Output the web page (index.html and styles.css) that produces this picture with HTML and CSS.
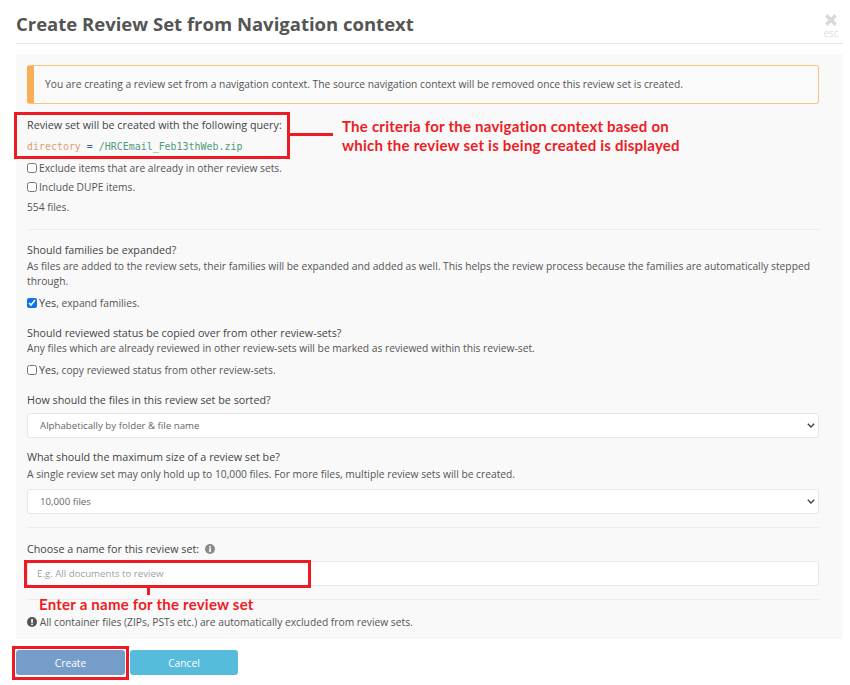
FILE: index.html
```html
<!DOCTYPE html>
<html lang="en">

<head>
    <meta charset="UTF-8">
    <title>Create Review Set from Navigation context</title>
    <link rel="stylesheet" href="styles.css">
</head>

<body>
    <div class="modal-header">
        <h2>Create Review Set from Navigation context</h2>
        <div class="close-box">
            <svg class="close-icon" width="14" height="14" viewBox="0 0 14 14">
                <path d="M1 3.5 3.5 1 7 4.5 10.500 1 13 3.500 9.500 7 13 10.500 10.500 13 7 9.500 3.500 13 1 10.500 4.500 7Z" fill="#d9d9d9" />
            </svg>
            <span>esc</span>
        </div>
    </div>

    <div class="panel">
        <div class="alert">You are creating a review set from a navigation context. The source navigation context will be removed once this review set is created.</div>

        <p class="label query-label">Review set will be created with the following query:</p>
        <p class="query"><span class="q-key">directory</span> <span class="q-op">=</span> <span class="q-val">/HRCEmail_Feb13thWeb.zip</span></p>
        <label class="check check-first"><input type="checkbox"><span>Exclude items that are already in other review sets.</span></label>
        <label class="check check-second"><input type="checkbox"><span>Include DUPE items.</span></label>
        <p class="count">554 files.</p>

        <hr class="rule rule-a">

        <p class="label">Should families be expanded?</p>
        <p class="help">As files are added to the review sets, their families will be expanded and added as well. This helps the review process because the families are automatically stepped through.</p>
        <label class="check check-yes"><input type="checkbox" checked><span><span class="label">Yes</span>, expand families.</span></label>

        <p class="label group">Should reviewed status be copied over from other review-sets?</p>
        <p class="help help-tight">Any files which are already reviewed in other review-sets will be marked as reviewed within this review-set.</p>
        <label class="check check-yes"><input type="checkbox"><span><span class="label">Yes</span>, copy reviewed status from other review-sets.</span></label>

        <p class="label group">How should the files in this review set be sorted?</p>
        <div class="select-box">
            <span>Alphabetically by folder &amp; file name</span>
            <svg width="8" height="5" viewBox="0 0 8 5"><path d="M.8.8l3.200 3.200L7.200.8" fill="none" stroke="#444" stroke-width="1.400" /></svg>
        </div>

        <p class="label group group-size">What should the maximum size of a review set be?</p>
        <p class="help help-loose">A single review set may only hold up to 10,000 files. For more files, multiple review sets will be created.</p>
        <div class="select-box select-size">
            <span>10,000 files</span>
            <svg width="8" height="5" viewBox="0 0 8 5"><path d="M.8.8l3.200 3.200L7.200.8" fill="none" stroke="#444" stroke-width="1.400" /></svg>
        </div>

        <hr class="rule rule-b">

        <p class="label name-label">Choose a name for this review set:
            <svg class="info" width="10" height="10" viewBox="0 0 10 10">
                <circle cx="5" cy="5" r="5" fill="#8a8a8a" />
                <rect x="4.200" y="4.200" width="1.700" height="3.800" fill="#fff" />
                <rect x="4.200" y="2" width="1.700" height="1.500" fill="#fff" />
            </svg>
        </p>
        <div class="text-input">E.g. All documents to review</div>

        <hr class="rule rule-c">

        <p class="note">
            <svg class="info" width="10" height="10" viewBox="0 0 10 10">
                <circle cx="5" cy="5" r="5" fill="#555" />
                <rect x="4.200" y="2" width="1.700" height="3.800" fill="#fff" />
                <rect x="4.200" y="6.600" width="1.700" height="1.500" fill="#fff" />
            </svg>
            All container files (ZIPs, PSTs etc.) are automatically excluded from review sets.
        </p>
    </div>

    <div class="actions">
        <button class="btn btn-create">Create</button>
        <button class="btn btn-cancel">Cancel</button>
    </div>

    <!-- Red annotations on top of the screenshot -->
    <div class="mark mark-query"></div>
    <div class="mark-line mark-query-line"></div>
    <div class="note-red note-query">The criteria for the navigation context based on<br>which the review set is being created is displayed</div>
    <div class="mark mark-input"></div>
    <div class="mark-line mark-input-line"></div>
    <div class="note-red note-input">Enter a name for the review set</div>
    <div class="mark mark-create"></div>
</body>

</html>
```

FILE: styles.css
```css
* {
    box-sizing: border-box;
}

body {
    margin: 0;
    padding: 0 7px 0 16px;
    font-family: "Open Sans", Arial, sans-serif;
    font-size: 10.25px;
    line-height: 15px;
    color: #555;
    background: #fff;
    position: relative;
    height: 685px;
    overflow: hidden;
}

p {
    margin: 0;
}

.modal-header {
    height: 44px;
    display: flex;
    justify-content: space-between;
    border-bottom: 1px solid #e6e6e6;
    margin-bottom: 10px;
}

.modal-header h2 {
    margin: 0;
    padding-top: 10px;
    font-size: 18.5px;
    line-height: 28px;
    font-weight: 700;
    color: #555;
}

.close-box {
    width: 18px;
    margin-right: 3px;
    padding-top: 13px;
    display: flex;
    flex-direction: column;
    align-items: center;
    font-size: 10px;
    line-height: 12px;
    color: #ddd;
}

.panel {
    background: #f9f9f9;
    height: 585px;
    padding: 11px 24px 0 11px;
}

.alert {
    height: 39px;
    padding: 11px 0 0 11px;
    background: #fafafa;
    border: 1px solid #f7c57f;
    border-left: 7px solid #f9ae56;
    border-radius: 3px;
    margin-bottom: 14px;
}

.label {
    font-size: 10.75px;
    font-weight: 500;
    color: #444;
}

.query {
    margin-top: 6px;
    font-family: "DejaVu Sans Mono", "Liberation Mono", monospace;
    font-size: 9.95px;
}

.q-key {
    color: #e0a070;
}

.q-op {
    color: #2b5f8f;
}

.q-val {
    color: #4f9a7c;
}

.check {
    display: flex;
    align-items: center;
    gap: 2px;
    white-space: pre;
}

.check input {
    width: 10px;
    height: 10px;
    margin: 0 0 1px;
    flex: none;
    accent-color: #0a75e8;
}

.check-first {
    margin-top: 7px;
}

.check-second {
    margin-top: 4px;
}

.count {
    margin-top: 5px;
}

.rule {
    border: none;
    border-top: 1px solid #ececec;
    margin: 0;
}

.rule-a {
    margin: 14px 0 13px;
}

.help {
    margin-top: 1px;
}

.help-tight {
    margin-top: 0;
}

.help-loose {
    margin-top: 2px;
}

.check-yes {
    margin-top: 7px;
}

.group {
    margin-top: 15px;
}

.group-size {
    margin-top: 12px;
}

.select-box {
    height: 25px;
    margin-top: 5px;
    padding: 0 3px 0 12px;
    background: #fff;
    border: 1px solid #e6e6e6;
    border-radius: 3px;
    display: flex;
    align-items: center;
    justify-content: space-between;
    font-size: 9.7px;
    color: #666;
}

.select-size {
    margin-top: 7px;
}

.rule-b {
    margin: 13px 0 14px;
}

.name-label .info {
    margin-left: 3px;
    vertical-align: -1px;
}

.text-input {
    height: 25px;
    margin-top: 4px;
    padding: 4px 0 0 9px;
    background: #fff;
    border: 1px solid #e6e6e6;
    border-radius: 3px;
    font-size: 9.7px;
    color: #a0a0a0;
}

.rule-c {
    margin: 13px 0 15px;
}

.note .info {
    vertical-align: -1px;
}

.actions {
    display: flex;
    gap: 5px;
    margin-top: 11px;
}

.btn {
    height: 25px;
    border: none;
    border-radius: 3px;
    color: #fff;
    font-family: inherit;
    font-size: 10.25px;
}

.btn-create {
    width: 109px;
    background: #749ec9;
}

.btn-cancel {
    width: 108px;
    background: #57bcdc;
}

.mark {
    position: absolute;
    border: 3px solid #ed1c24;
}

.mark-query {
    left: 14px;
    top: 112px;
    width: 276px;
    height: 47px;
}

.mark-input {
    left: 24px;
    top: 560px;
    width: 287px;
    height: 28px;
}

.mark-create {
    left: 12px;
    top: 646px;
    width: 117px;
    height: 34px;
}

.mark-line {
    position: absolute;
    background: #ed1c24;
}

.mark-query-line {
    left: 290px;
    top: 133px;
    width: 43px;
    height: 3px;
}

.mark-input-line {
    left: 147px;
    top: 588px;
    width: 3px;
    height: 7px;
}

.note-red {
    position: absolute;
    font-family: Lato, "Open Sans", sans-serif;
    font-weight: 700;
    font-size: 15px;
    letter-spacing: 0.23px;
    line-height: 19px;
    color: #ed1c24;
    white-space: nowrap;
}

.note-query {
    left: 342px;
    top: 117px;
}

.note-input {
    left: 39px;
    top: 595px;
}
```
